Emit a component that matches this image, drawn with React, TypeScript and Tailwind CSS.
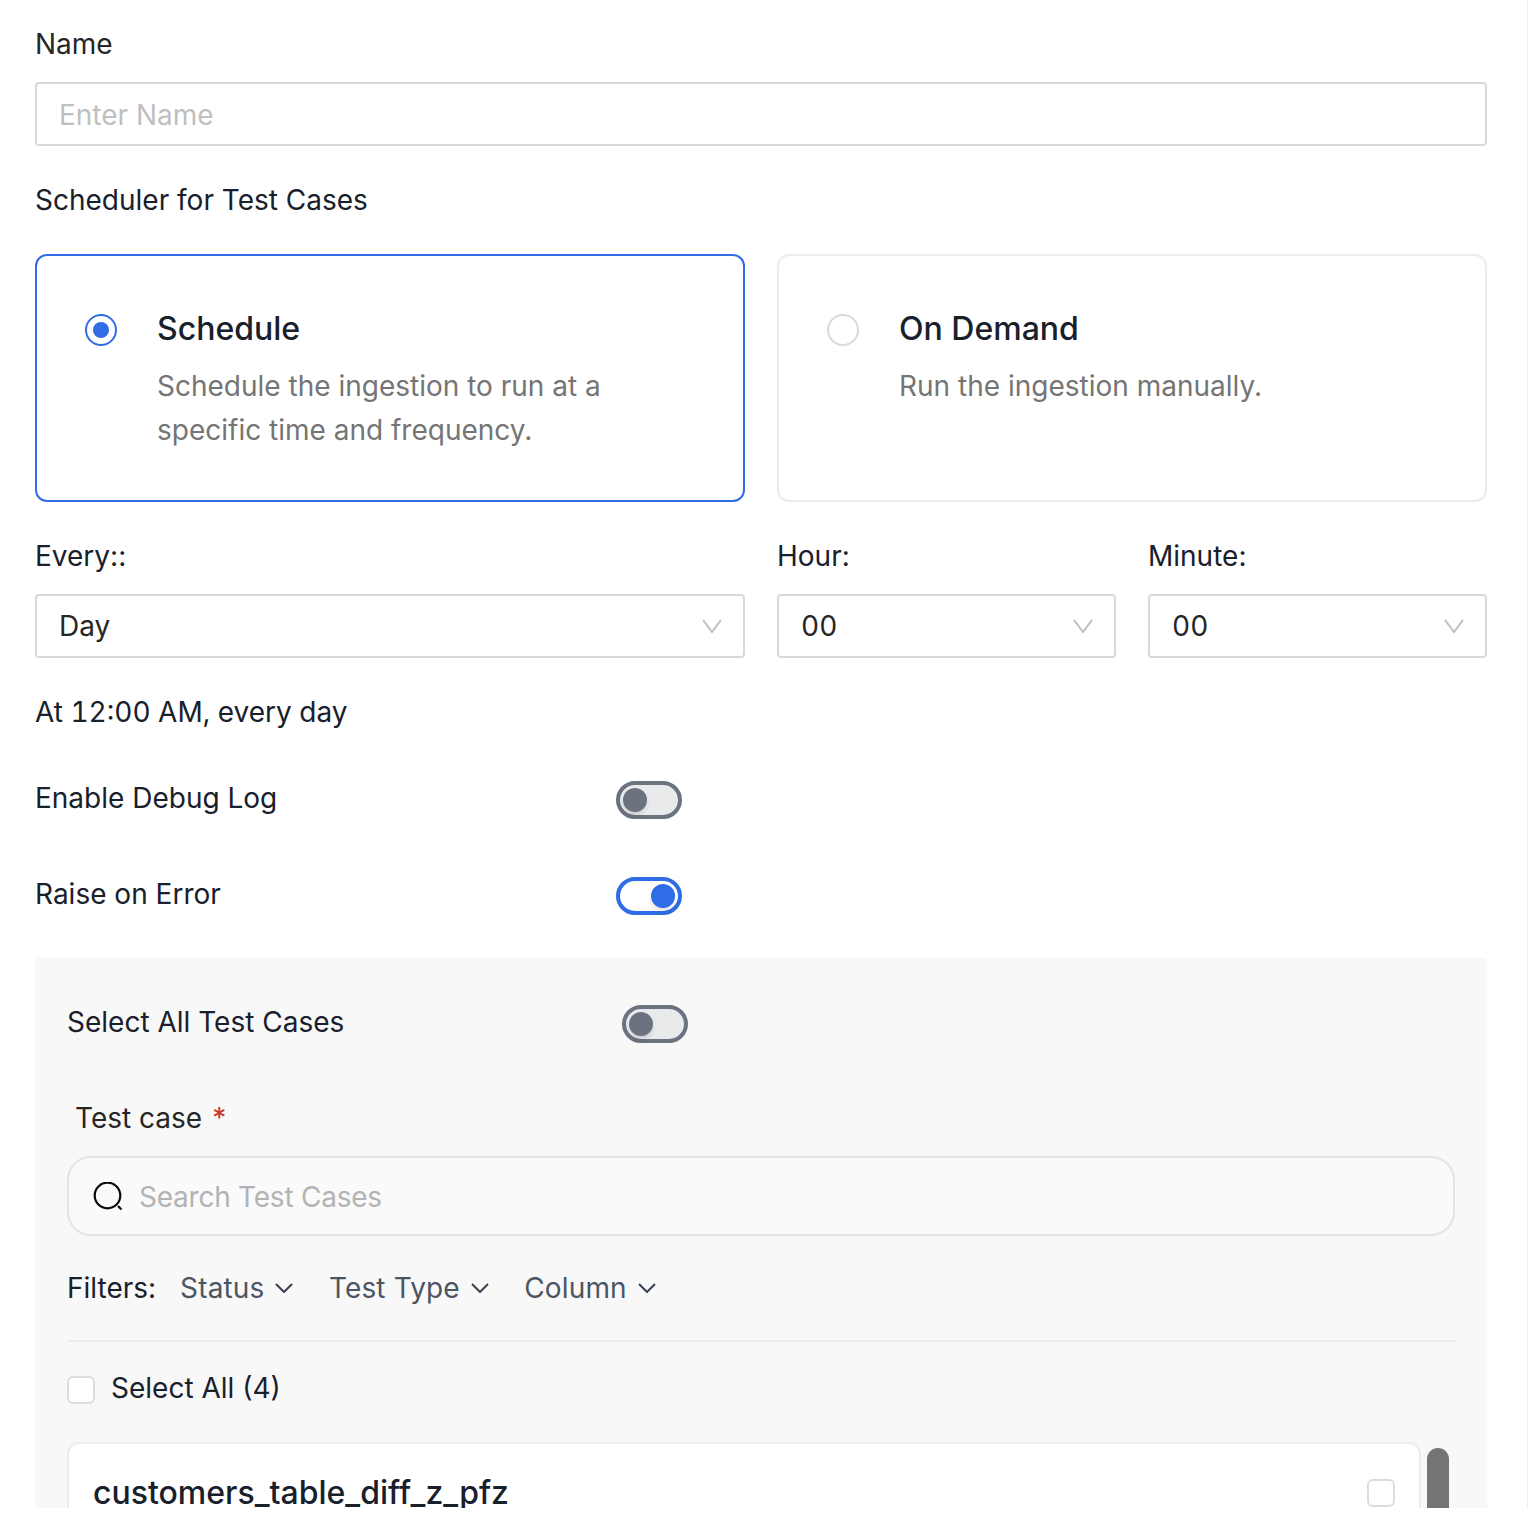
function Chevron({ className }: { className: string }) {
  return (
    <svg viewBox="0 0 20 14" fill="none" stroke="currentColor" className={className}>
      <path d="M1 1 L10 13 L19 1" strokeWidth="2" />
    </svg>
  )
}

function SmallChevron() {
  return (
    <svg viewBox="0 0 18 10" fill="none" stroke="currentColor" className="h-[10px] w-[18px] text-[#374151]">
      <path d="M1 1 L9 9 L17 1" strokeWidth="2" />
    </svg>
  )
}

function SearchIcon() {
  return (
    <svg viewBox="0 0 30 28" fill="none" stroke="#0a0a0a" className="h-[28px] w-[30px]">
      <circle cx="14.5" cy="13.5" r="12.8" strokeWidth="2.2" />
      <path d="M25 24 L28.5 27.5" strokeWidth="2.2" />
    </svg>
  )
}

function Toggle({ on }: { on?: boolean }) {
  return (
    <div
      className={`mt-[5px] flex h-[38px] w-[66px] items-center rounded-full border-[4px] px-[3px] ${
        on ? 'justify-end border-[#2f6ce5] bg-white' : 'border-[#6b7280] bg-[#e8eaec]'
      }`}
    >
      <div className={`h-[24px] w-[24px] rounded-full shadow-md ${on ? 'bg-[#2f6ce5]' : 'bg-[#6b7280]'}`} />
    </div>
  )
}

function SelectBox({ value }: { value: string }) {
  return (
    <div className="flex h-[64px] items-center justify-between rounded-[4px] border-2 border-[#d9d9d9] bg-white pl-[22px] pr-[21px] text-[#262626]">
      <span className="tabular-nums">{value}</span>
      <Chevron className="h-[14px] w-[20px] text-[#bfbfbf]" />
    </div>
  )
}

function PlanCard({ title, text, active }: { title: string; text: string; active?: boolean }) {
  return (
    <div
      className={`flex h-[248px] rounded-[12px] border-2 py-[48px] pl-[48px] pr-[80px] ${
        active ? 'border-[#2f6ce5]' : 'border-[#eaecf0]'
      }`}
    >
      <div className="flex h-[52px] w-[72px] shrink-0 items-center">
        {active ? (
          <div className="flex h-[32px] w-[32px] items-center justify-center rounded-full border-2 border-[#2f6ce5]">
            <div className="h-[16px] w-[16px] rounded-full bg-[#2f6ce5]" />
          </div>
        ) : (
          <div className="h-[32px] w-[32px] rounded-full border-2 border-[#d9d9d9]" />
        )}
      </div>
      <div>
        <div className="mt-px text-[32px] font-medium leading-[48px] text-[#18202c]">{title}</div>
        <p className="mt-[11px] text-[#757575]">{text}</p>
      </div>
    </div>
  )
}

function FilterItem({ label }: { label: string }) {
  return (
    <div className="flex items-center gap-[11px] tracking-[0.14px] text-[#4b5563]">
      <span>{label}</span>
      <SmallChevron />
    </div>
  )
}

function Checkbox() {
  return <div className="mt-[10px] h-[28px] w-[28px] rounded-[6px] border-2 border-[#dcdcdc] bg-white" />
}

export default function App() {
  return (
    <div className="h-[1520px] w-[1528px] bg-white">
      <div
        className="h-[1508px] overflow-hidden border-r border-[#eeeeee] pl-[35px] pr-[40px] pt-[22px] text-[28px] leading-[44px] text-[#18202c]"
        style={{ fontFamily: 'Inter, sans-serif' }}
      >
        <label className="block text-[#262626]">Name</label>
        <div className="mt-[16px] flex h-[64px] items-center rounded-[4px] border-2 border-[#d9d9d9] pl-[22px] pt-[2px] text-[#bfbfbf]">
          Enter Name
        </div>

        <div className="mt-[32px]">Scheduler for Test Cases</div>

        <div className="mt-[32px] grid grid-cols-2 gap-[32px]">
          <PlanCard active title="Schedule" text="Schedule the ingestion to run at a specific time and frequency." />
          <PlanCard title="On Demand" text="Run the ingestion manually." />
        </div>

        <div className="mt-[32px] grid grid-cols-[710px_1fr_1fr] gap-x-[32px] gap-y-[16px]">
          <div>Every::</div>
          <div>Hour:</div>
          <div>Minute:</div>
          <SelectBox value="Day" />
          <SelectBox value="00" />
          <SelectBox value="00" />
        </div>

        <div className="mt-[32px] tabular-nums">At 12:00 AM, every day</div>

        <div className="mt-[42px] flex items-start">
          <div className="w-[581px]">Enable Debug Log</div>
          <Toggle />
        </div>
        <div className="mt-[52px] flex items-start">
          <div className="w-[581px]">Raise on Error</div>
          <Toggle on />
        </div>

        <div className="mt-[42px] rounded-[4px] bg-[#f8f8f8] px-[32px] pt-[42px]">
          <div className="flex items-start">
            <div className="w-[555px]">Select All Test Cases</div>
            <Toggle />
          </div>

          <div className="mt-[52px] flex pl-[8px]">
            <span className="text-[#262626]">Test case</span>
            <span className="ml-[10px] text-[#c9352b]">*</span>
          </div>

          <div className="mt-[16px] flex h-[80px] items-center gap-[16px] rounded-[24px] border-2 border-[#e4e4e4] bg-[#fafafa] pl-[24px] text-[#b3b3b3]">
            <SearchIcon />
            <span className="pt-[2px] tracking-[-0.24px]">Search Test Cases</span>
          </div>

          <div className="mt-[30px] flex items-center border-b-2 border-[#eaecf0] pb-[30px]">
            <span className="mr-[24px]">Filters:</span>
            <div className="flex items-center gap-[35.5px]">
              <FilterItem label="Status" />
              <FilterItem label="Test Type" />
              <FilterItem label="Column" />
            </div>
          </div>

          <div className="mt-[24px] flex items-start gap-[16px]">
            <Checkbox />
            <span>Select All (4)</span>
          </div>

          <div className="mt-[32px] flex gap-[6px]">
            <div className="flex h-[200px] w-[1354px] justify-between rounded-t-[12px] border-2 border-[#eaecf0] bg-white pl-[24px] pr-[24px] pt-[25px]">
              <div className="text-[32px] font-medium leading-[48px]">customers_table_diff_z_pfz</div>
              <div className="flex h-[48px] items-start">
                <Checkbox />
              </div>
            </div>
            <div className="mt-[6px] h-[120px] w-[22px] rounded-full bg-[#757575]" />
          </div>
        </div>
      </div>
    </div>
  )
}
